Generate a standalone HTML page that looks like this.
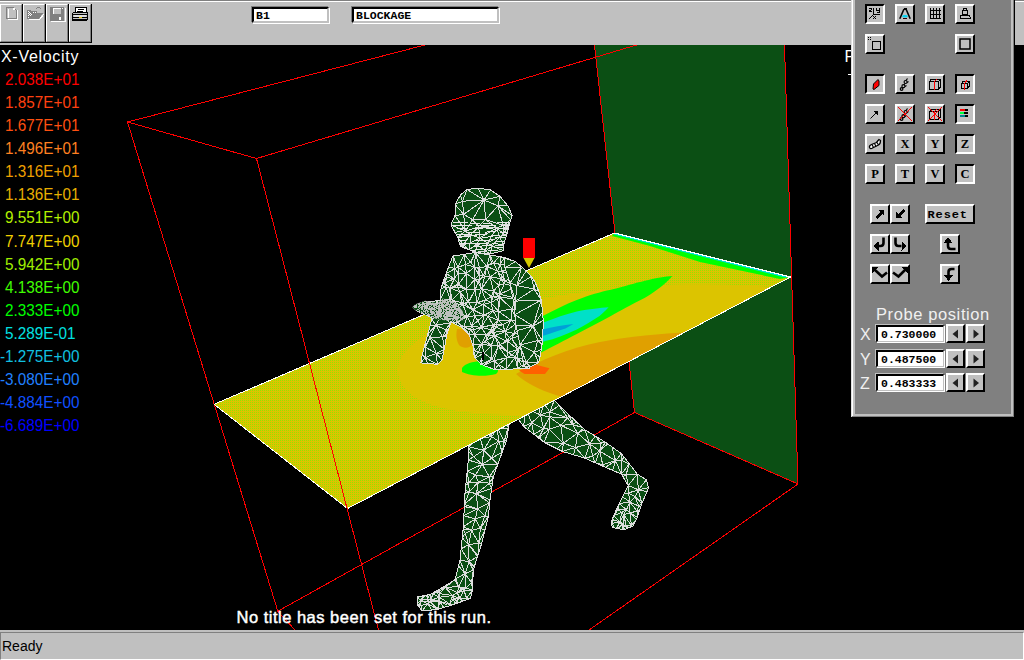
<!DOCTYPE html>
<html><head><meta charset="utf-8">
<style>
html,body{margin:0;padding:0;width:1024px;height:660px;overflow:hidden;background:#000;}
body{position:relative;font-family:"Liberation Sans",sans-serif;}
.a{position:absolute;}
#tb{left:0;top:0;width:1024px;height:45px;background:#c0c0c0;}
.tbb{position:absolute;top:4px;width:23px;height:39px;background:#000;}
.tbb::before{content:"";position:absolute;left:0;top:0;width:20px;height:36px;background:#c0c0c0;border-top:1px solid #fff;border-left:1px solid #fff;border-right:1px solid #808080;border-bottom:1px solid #808080;}
.fld{position:absolute;top:7px;height:12px;background:#fff;border-top:2px solid #000;border-left:2px solid #000;border-right:2px solid #c0c0c0;border-bottom:2px solid #c0c0c0;box-shadow:-1px -1px 0 #808080,1px 1px 0 #fff;font-family:"Liberation Mono",monospace;font-weight:bold;font-size:11.5px;line-height:13px;padding-left:2px;box-sizing:content-box;}
#sb{left:0;top:630px;width:1024px;height:30px;background:#c0c0c0;}
#sbi{position:absolute;left:0;top:2px;width:1022px;height:26px;border-top:1px solid #808080;border-left:1px solid #808080;border-right:1px solid #fff;border-bottom:1px solid #fff;}
#pn{left:851px;top:0;width:164px;height:419px;background:#808080;}
.pb{position:absolute;width:16px;height:16px;background:#c0c0c0;border:2px solid;border-color:#fff #000 #000 #fff;}
.pb.dn{border-color:#000 #fff #fff #000;}
.pb svg{position:absolute;left:0;top:0;}
.fld2{position:absolute;width:62px;height:14px;background:#fff;border-top:2px solid #000;border-left:2px solid #000;border-right:1px solid #c0c0c0;border-bottom:1px solid #c0c0c0;box-shadow:-1px -1px 0 #c0c0c0,1px 1px 0 #fff;font-family:"Liberation Mono",monospace;font-weight:bold;font-size:11.5px;line-height:15px;padding-left:3px;letter-spacing:0;}
.lg{position:absolute;font-size:15.5px;line-height:18px;white-space:pre;}
</style></head><body>
<!-- toolbar -->
<div id="tb" class="a">
  <div class="a" style="left:0;top:0;width:1024px;height:1px;background:#808080"></div>
  <div class="a" style="left:0;top:1px;width:1024px;height:1px;background:#fff"></div>
  <div class="tbb" style="left:0"></div>
  <div class="tbb" style="left:23px"></div>
  <div class="tbb" style="left:46px"></div>
  <div class="tbb" style="left:69px"></div>
  <svg class="a" style="left:0;top:0" width="100" height="45" shape-rendering="crispEdges">
    <path d="M7.5 19.5H17.5V9.5M8 8.5V19" stroke="#fff" fill="none"/>
    <path d="M6.5 7.5H13.5L16.5 10.5V18.5H6.5Z" stroke="#808080" fill="none"/>
    <rect x="13" y="8" width="2" height="2" fill="#fff"/>
    <path d="M28.5 19.5H39.5L43.5 14.5" stroke="#fff" fill="none"/>
    <polygon points="27,10 30,10 31,11 37,11 37,13 43,13 39,19 27,19" fill="#808080"/>
    <path d="M28 11h1M29 12h1M28 13h1M30 13h1M29 14h1M28 15h1M31 14h1M30 15h1M28 17h1M33 12h1M35 12h1" stroke="#fff"/>
    <path d="M35.5 9.5l2-2h2l2 2" stroke="#808080" fill="none"/>
    <rect x="50" y="7" width="14" height="14" fill="#808080"/>
    <path d="M51 21.5H65.5V8" stroke="#fff" fill="none"/>
    <rect x="53" y="8" width="8" height="6" fill="#c0c0c0"/>
    <path d="M53.5 14V8.5H61" stroke="#fff" fill="none"/>
    <rect x="59" y="17" width="2" height="3" fill="#fff"/>
    <rect x="62" y="8" width="1" height="1" fill="#fff"/>
    <polygon points="76,7 86,7 86,12 75,12" fill="#fff" stroke="#000" stroke-width="1"/>
    <path d="M78 9.5h6M77 11h6" stroke="#000"/>
    <rect x="72.5" y="12.5" width="15" height="8" rx="1.5" fill="#c0c0c0" stroke="#000"/>
    <path d="M73 14.5h14M73 17.5h14M73 19.5h14" stroke="#000"/>
    <rect x="74" y="15" width="12" height="2" fill="#e0e0e0"/>
    <rect x="79" y="17" width="3" height="1" fill="#e0c000"/>
  </svg>
  <div class="fld" style="left:252px;width:71px">B1</div>
  <div class="fld" style="left:352px;width:141px">BLOCKAGE</div>
</div>

<!-- scene -->
<svg id="scene" class="a" style="left:0;top:45px" width="1024" height="585" viewBox="0 45 1024 585">
<polygon points="594.5,45.0 784.5,45.0 798.0,484.0 634.5,412.5" fill="#0b4f14"/>
<g shape-rendering="crispEdges">
<line x1="127.5" y1="122" x2="425" y2="45" stroke="#ff0000" stroke-width="1"/>
<line x1="127.5" y1="122" x2="277.8" y2="611.2" stroke="#ff0000" stroke-width="1"/>
<line x1="277.8" y1="611.2" x2="634.5" y2="412.5" stroke="#ff0000" stroke-width="1"/>
<line x1="594.5" y1="45" x2="634.5" y2="412.5" stroke="#ff0000" stroke-width="1"/>
<line x1="784.5" y1="45" x2="798" y2="484" stroke="#ff0000" stroke-width="1"/>
<line x1="634.5" y1="412.5" x2="798" y2="484" stroke="#ff0000" stroke-width="1"/>
</g>
<clipPath id="fl"><polygon points="470.0,430.0 512.0,405.0 506.7,440.0 493.3,476.7 490.0,500.0 488.3,516.7 481.7,543.3 473.3,570.0 472.5,590.0 470.5,598.4 455.0,604.0 437.8,609.4 422.0,611.0 417.0,604.0 417.5,597.0 430.0,594.5 440.0,589.0 455.0,579.7 460.0,560.0 463.3,526.7 465.0,493.3 468.3,460.0 468.3,446.7"/></clipPath>
<polygon points="470.0,430.0 512.0,405.0 506.7,440.0 493.3,476.7 490.0,500.0 488.3,516.7 481.7,543.3 473.3,570.0 472.5,590.0 470.5,598.4 455.0,604.0 437.8,609.4 422.0,611.0 417.0,604.0 417.5,597.0 430.0,594.5 440.0,589.0 455.0,579.7 460.0,560.0 463.3,526.7 465.0,493.3 468.3,460.0 468.3,446.7" fill="#0b4f14"/>
<path clip-path="url(#fl)" d="M476.5 493.7L464.4 504.4M457.0 601.3L455.0 604.0M458.5 597.9L457.6 592.6M498.7 441.2L491.8 458.2M489.4 483.2L491.6 488.4M461.2 589.0L458.6 586.8M439.3 597.2L436.9 591.9M489.4 483.2L478.4 482.0M478.7 543.1L478.6 556.1M473.5 456.8L467.1 449.6M456.9 600.4L458.5 597.9M455.8 578.8L458.6 586.8M469.1 561.7L473.3 570.0M468.8 483.0L466.1 482.2M468.6 544.6L462.2 537.8M494.0 413.3L492.9 421.2M442.7 583.0L445.2 587.2M489.4 477.1L493.3 476.7M458.6 586.8L457.6 592.6M483.6 450.2L480.2 437.9M498.7 441.2L483.6 450.2M489.4 483.2L493.3 476.7M465.0 573.7L458.6 586.8M431.2 600.3L430.0 594.5M468.6 544.6L477.5 556.6M438.5 601.0L437.8 609.4M439.3 597.2L431.2 600.3M449.9 604.0L439.8 601.5M427.9 603.7L420.9 605.6M471.5 582.4L472.5 590.0M468.6 544.6L465.3 533.5M439.7 593.6L439.3 591.4M478.7 543.1L468.6 544.6M504.3 441.1L502.7 452.3M469.4 599.4L466.6 598.2M471.5 582.4L465.0 573.7M504.3 441.1L498.7 441.2M497.3 427.7L491.8 436.7M456.9 600.4L453.4 598.8M504.5 413.4L501.5 411.2M468.6 544.6L461.1 548.9M480.2 437.9L468.3 446.7M489.4 477.1L497.8 464.5M476.5 493.7L477.6 508.9M476.5 493.7L469.2 492.0M507.6 429.1L497.3 427.7M477.6 508.9L475.2 519.1M427.9 603.7L420.2 600.5M464.0 590.6L459.7 598.2M420.9 605.6L422.0 611.0M447.5 605.3L439.8 601.5M497.3 427.7L492.9 421.2M464.0 590.6L457.6 592.6M480.4 528.3L471.6 530.3M475.2 519.1L463.3 526.7M468.8 483.0L460.9 488.7M452.4 595.6L457.6 592.6M447.5 605.3L449.9 604.0M464.0 590.6L462.3 589.7M471.6 530.3L463.3 526.7M491.8 436.7L480.5 423.8M459.7 598.2L458.5 597.9M504.5 413.4L508.5 428.3M504.5 413.4L494.0 413.3M489.4 477.1L489.4 483.2M452.4 595.6L453.4 598.8M439.8 601.5L437.8 609.4M484.7 515.8L488.3 516.7M478.4 482.0L475.4 474.9M478.4 427.8L480.2 437.9M480.2 437.9L470.0 430.0M465.0 573.7L460.0 560.0M484.7 515.8L477.6 508.9M426.5 593.9L420.2 600.5M464.6 605.5L457.0 601.3M471.5 582.4L465.5 588.2M465.0 573.7L455.8 578.8M480.4 528.3L475.2 519.1M462.9 528.9L465.3 533.5M464.0 590.6L466.6 598.2M445.2 587.2L457.6 592.6M426.5 593.9L427.5 598.9M492.9 421.2L491.8 436.7M482.3 464.3L468.3 460.0M458.5 597.9L453.4 598.8M491.8 436.7L483.6 450.2M482.3 464.3L473.5 456.8M439.8 601.5L445.4 610.4M436.8 591.9L436.9 591.9M431.2 600.3L427.5 598.9M466.6 598.2L472.5 590.0M471.6 530.3L468.6 544.6M475.4 474.9L467.2 471.1M465.0 573.7L455.9 562.7M439.8 601.5L439.3 597.2M477.6 508.9L464.4 504.4M436.7 590.0L436.9 591.9M491.8 458.2L482.3 464.3M482.3 464.3L497.8 464.5M439.3 591.4L436.7 590.0M439.3 591.4L436.9 591.9M439.3 591.4L440.0 589.0M430.6 602.1L427.9 603.7M439.7 593.6L436.9 591.9M430.6 602.1L437.8 609.4M475.2 519.1L471.6 530.3M469.1 561.7L477.5 556.6M465.0 573.7L473.3 570.0M439.3 591.4L445.2 587.2M498.7 441.2L502.2 452.2M430.6 602.1L431.2 600.3M428.5 601.9L420.2 600.5M439.7 593.6L445.2 587.2M477.6 508.9L463.9 515.6M498.7 441.2L491.8 436.7M456.9 600.4L457.0 601.3M489.3 502.7L484.7 515.8M491.8 458.2L483.6 450.2M469.1 561.7L461.1 548.9M477.6 508.9L465.3 506.8M461.2 589.0L465.5 588.2M427.5 598.9L430.0 594.5M478.7 543.1L481.7 543.3M471.5 582.4L473.3 570.0M428.5 601.9L427.5 598.9M478.7 543.1L471.6 530.3M427.9 603.7L422.0 611.0M458.6 586.8L455.0 579.7M504.3 441.1L497.3 427.7M478.6 556.1L468.6 544.6M469.2 492.0L460.9 488.7M449.9 604.0L439.3 597.2M453.4 598.8L455.0 604.0M461.2 589.0L457.6 592.6M452.4 595.6L439.7 593.6M476.5 493.7L490.0 500.0M430.6 602.1L438.5 601.0M473.5 456.8L468.3 446.7M469.2 492.0L465.0 493.3M455.7 614.3L449.9 604.0M465.0 573.7L465.5 588.2M419.9 604.9L420.9 605.6M461.2 589.0L462.3 589.7M427.9 603.7L437.8 609.4M439.7 593.6L439.3 597.2M497.3 427.7L508.5 428.3M480.4 528.3L485.0 530.0M489.4 483.2L476.5 493.7M459.7 598.2L457.6 592.6M417.6 606.7L420.9 605.6M476.5 493.7L491.6 488.4M458.6 586.8L445.2 587.2M480.2 437.9L464.1 441.4M453.4 598.8L457.0 601.3M504.5 413.4L510.2 416.7M464.0 590.6L472.5 590.0M499.3 484.7L489.4 483.2M491.8 436.7L480.2 437.9M483.6 450.2L482.3 464.3M465.3 533.5L462.2 537.8M420.2 600.5L417.5 597.0M483.6 450.2L473.5 456.8M489.4 477.1L478.4 482.0M489.4 477.1L475.4 474.9M480.9 579.9L471.5 582.4M478.4 427.8L473.4 428.2M480.4 528.3L488.3 516.7M461.0 609.9L457.0 601.3M471.6 530.3L465.3 533.5M459.7 598.2L457.0 601.3M468.6 544.6L469.1 561.7M458.6 586.8L465.5 588.2M480.2 437.9L473.4 428.2M497.3 427.7L498.7 441.2M427.5 598.9L420.2 600.5M504.5 413.4L512.0 405.0M482.3 464.3L467.2 471.1M459.7 598.2L466.6 598.2M459.7 598.2L464.6 605.5M491.8 436.7L478.4 427.8M435.1 615.7L427.9 603.7M420.2 600.5L417.0 604.0M489.4 477.1L482.3 464.3M438.5 601.0L439.8 601.5M492.9 421.2L491.0 417.5M419.9 604.9L417.6 606.7M459.7 598.2L466.6 603.2M445.2 587.2L455.0 579.7M471.6 530.3L462.9 528.9M432.6 593.9L436.9 591.9M504.5 413.4L497.3 427.7M468.8 483.0L467.2 471.1M476.7 569.3L469.1 561.7M491.8 458.2L497.8 464.5M465.5 588.2L472.5 590.0M452.4 595.6L445.2 587.2M438.5 601.0L431.2 600.3M478.4 482.0L469.2 492.0M484.7 515.8L480.4 528.3M449.9 604.0L455.0 604.0M480.4 528.3L478.7 543.1M475.4 474.9L468.8 483.0M504.3 441.1L502.2 452.2M475.2 519.1L463.9 515.6M452.4 595.6L449.9 604.0M468.8 483.0L469.2 492.0M513.2 414.7L504.5 413.4M507.6 429.1L504.3 441.1M492.9 421.2L480.5 423.8M464.0 590.6L465.5 588.2M459.7 598.2L456.9 600.4M432.6 593.9L431.2 600.3M445.2 587.2L440.0 589.0M428.5 601.9L427.9 603.7M504.5 413.4L492.9 421.2M478.4 427.8L480.5 423.8M491.8 458.2L502.2 452.2M466.6 603.2L466.6 598.2M420.9 605.6L420.2 600.5M452.4 595.6L458.5 597.9M478.4 482.0L476.5 493.7M469.1 561.7L460.0 560.0M438.5 601.0L439.3 597.2M489.3 502.7L477.6 508.9M478.4 482.0L468.8 483.0M449.9 604.0L453.4 598.8M419.9 604.9L417.0 604.0M478.7 543.1L485.0 530.0M484.7 515.8L475.2 519.1M462.3 589.7L465.5 588.2M428.5 601.9L431.2 600.3M483.6 450.2L468.3 446.7M504.3 441.1L506.7 440.0M452.4 595.6L439.3 597.2M432.6 593.9L439.3 597.2M473.5 456.8L468.3 460.0M469.2 492.0L464.4 504.4M462.3 589.7L457.6 592.6M482.3 464.3L475.4 474.9M419.9 604.9L420.2 600.5M489.3 502.7L476.5 493.7M466.6 598.2L470.5 598.4M469.1 561.7L465.0 573.7M430.6 602.1L428.5 601.9" stroke="#dcdcdc" stroke-width="1" fill="none" shape-rendering="crispEdges"/>
<polygon points="470.0,430.0 512.0,405.0 506.7,440.0 493.3,476.7 490.0,500.0 488.3,516.7 481.7,543.3 473.3,570.0 472.5,590.0 470.5,598.4 455.0,604.0 437.8,609.4 422.0,611.0 417.0,604.0 417.5,597.0 430.0,594.5 440.0,589.0 455.0,579.7 460.0,560.0 463.3,526.7 465.0,493.3 468.3,460.0 468.3,446.7" fill="none" stroke="#e0e0e0" stroke-width="1" shape-rendering="crispEdges"/>
<clipPath id="bl"><polygon points="515.0,415.0 548.0,395.0 554.3,400.2 569.1,415.0 585.0,429.8 605.5,442.3 621.4,453.6 637.3,474.1 646.4,479.8 648.6,487.7 641.8,503.6 637.3,517.3 632.7,526.4 623.6,529.8 612.3,527.5 611.1,521.8 619.1,503.6 628.2,485.5 621.4,474.1 605.5,467.3 585.0,458.2 562.3,451.4 544.1,442.3 523.6,426.4"/></clipPath>
<polygon points="515.0,415.0 548.0,395.0 554.3,400.2 569.1,415.0 585.0,429.8 605.5,442.3 621.4,453.6 637.3,474.1 646.4,479.8 648.6,487.7 641.8,503.6 637.3,517.3 632.7,526.4 623.6,529.8 612.3,527.5 611.1,521.8 619.1,503.6 628.2,485.5 621.4,474.1 605.5,467.3 585.0,458.2 562.3,451.4 544.1,442.3 523.6,426.4" fill="#0b4f14"/>
<path clip-path="url(#bl)" d="M623.0 524.6L620.0 521.7M623.6 527.3L623.0 524.6M563.4 443.2L544.1 442.3M626.2 525.9L629.4 527.6M589.7 443.9L599.7 451.0M599.7 451.0L615.6 460.7M623.6 527.3L626.1 530.5M615.9 529.7L621.7 525.4M602.7 464.6L595.2 462.8M589.7 443.9L592.7 456.2M589.7 443.9L595.2 436.1M589.7 443.9L585.0 458.2M599.7 451.0L605.5 442.3M544.2 403.8L554.3 400.2M549.4 429.2L539.3 436.9M572.5 424.5L569.1 415.0M626.4 509.7L619.1 503.6M572.5 424.5L560.8 425.3M621.6 460.5L621.4 474.1M638.3 489.8L628.5 493.0M602.7 464.6L605.5 467.3M544.2 403.8L549.8 411.9M621.7 512.5L613.8 515.6M543.5 428.6L533.9 434.4M589.7 443.9L585.0 429.8M626.1 530.5L626.2 525.9M631.5 525.5L629.9 512.7M629.3 463.9L621.4 474.1M577.6 433.1L575.5 447.5M635.2 496.7L638.6 505.9M621.7 512.5L618.1 509.7M612.7 519.8L611.9 523.6M630.0 502.1L637.1 511.3M631.5 525.5L626.2 525.9M540.5 414.9L549.4 416.9M610.5 441.3L615.6 460.7M609.9 506.6L618.5 509.2M638.6 505.9L637.1 511.3M620.0 521.7L611.9 523.6M621.7 525.4L623.6 529.8M621.7 512.5L626.4 509.7M638.3 489.8L641.8 503.6M612.7 519.8L620.0 521.7M592.7 456.2L585.0 458.2M577.6 433.1L563.4 443.2M526.0 408.3L523.6 426.4M587.5 416.7L572.5 424.5M635.2 496.7L630.0 502.1M615.6 460.7L621.6 460.5M601.1 443.0L605.5 442.3M626.1 474.6L628.2 485.5M638.3 489.8L648.6 487.7M630.0 502.1L629.9 512.7M615.6 460.7L605.5 467.3M601.1 443.0L599.7 451.0M531.6 422.9L543.5 428.6M539.3 436.9L533.9 434.4M543.5 428.6L549.4 429.2M615.6 460.7L612.4 470.9M549.8 411.9L567.6 417.8M531.6 422.9L523.6 426.4M567.6 417.8L572.5 424.5M618.5 509.2L621.7 512.5M615.6 460.7L621.4 453.6M615.9 529.7L611.9 523.6M531.6 422.9L525.7 432.4M549.8 411.9L554.3 400.2M647.0 508.1L637.1 511.3M563.4 443.2L554.9 450.5M599.7 451.0L602.7 464.6M626.1 474.6L637.3 474.1M601.1 443.0L595.2 436.1M549.8 411.9L549.4 416.9M584.2 428.0L577.6 433.1M629.9 512.7L637.3 517.3M563.4 443.2L562.3 451.4M635.2 496.7L641.8 503.6M615.9 529.7L620.0 521.7M601.1 443.0L589.7 443.9M539.3 436.9L544.1 442.3M623.7 514.7L621.7 512.5M623.7 514.7L629.9 512.7M575.5 447.5L562.3 451.4M623.7 514.7L620.0 521.7M589.7 443.9L575.5 447.5M623.7 514.7L631.5 525.5M623.7 514.7L626.2 525.9M599.7 451.0L592.7 456.2M626.1 474.6L629.3 463.9M629.9 512.7L626.4 509.7M628.5 493.0L628.2 485.5M549.4 416.9L560.8 425.3M544.2 403.8L548.0 395.0M638.6 505.9L641.8 503.6M623.0 524.6L621.6 525.0M544.2 403.8L540.5 414.9M531.6 422.9L526.0 408.3M629.9 512.7L637.1 511.3M602.7 464.6L604.5 475.5M631.5 525.5L632.7 526.4M625.3 455.2L621.6 460.5M623.6 527.3L621.7 525.4M540.5 414.9L543.5 428.6M544.2 403.8L537.0 401.7M610.5 441.3L599.7 451.0M626.2 525.9L623.0 524.6M609.9 506.6L618.1 509.7M638.6 505.9L647.0 508.1M623.6 527.3L626.2 525.9M631.5 525.5L629.4 527.6M540.5 414.9L531.6 422.9M549.4 429.2L544.1 442.3M592.7 456.2L595.2 462.8M559.0 405.5L567.6 417.8M621.7 525.4L623.0 524.6M549.4 429.2L563.4 443.2M637.1 511.3L637.3 517.3M540.5 414.9L537.0 401.7M619.7 494.7L630.0 502.1M572.5 424.5L584.2 428.0M621.6 460.5L629.3 463.9M638.3 489.8L652.1 492.7M543.5 428.6L539.3 436.9M567.6 417.8L569.1 415.0M618.1 509.7L613.8 515.6M620.0 521.7L613.8 515.6M628.2 528.5L626.2 525.9M638.3 489.8L646.4 479.8M621.7 512.5L620.0 521.7M638.3 489.8L628.2 485.5M567.6 417.8L560.8 425.3M615.6 460.7L621.4 474.1M572.5 424.5L577.6 433.1M630.0 502.1L619.1 503.6M559.0 405.5L549.8 411.9M638.3 489.8L635.2 496.7M615.6 460.7L602.7 464.6M540.5 414.9L526.0 408.3M531.6 422.9L533.9 434.4M618.5 509.2L619.1 503.6M621.6 460.5L621.4 453.6M620.0 521.7L621.6 525.0M621.7 525.4L621.6 525.0M549.8 411.9L540.5 414.9M638.3 489.8L637.3 474.1M567.6 417.8L549.4 416.9M560.8 425.3L577.6 433.1M626.1 474.6L617.8 480.8M577.6 433.1L589.7 443.9M628.5 493.0L635.2 496.7M575.5 447.5L573.6 454.8M623.7 514.7L623.0 524.6M636.4 519.3L629.9 512.7M618.5 509.2L618.1 509.7M549.4 416.9L549.4 429.2M630.0 502.1L626.4 509.7M560.8 425.3L563.4 443.2M637.3 474.1L628.2 485.5M573.9 412.5L572.5 424.5M628.5 493.0L630.0 502.1M636.4 519.3L631.5 525.5M623.6 527.3L623.6 529.8M577.6 433.1L585.0 429.8M618.5 509.2L626.4 509.7M599.7 451.0L595.2 462.8M644.8 515.3L637.1 511.3M631.8 527.3L631.5 525.5M575.5 447.5L585.0 458.2M626.1 474.6L621.4 474.1M539.3 436.9L531.5 446.9M549.4 416.9L543.5 428.6M615.9 529.7L621.6 525.0M560.8 425.3L549.4 429.2M563.4 443.2L575.5 447.5M623.7 514.7L626.4 509.7M628.5 493.0L619.7 494.7M630.0 502.1L638.6 505.9" stroke="#dcdcdc" stroke-width="1" fill="none" shape-rendering="crispEdges"/>
<polygon points="515.0,415.0 548.0,395.0 554.3,400.2 569.1,415.0 585.0,429.8 605.5,442.3 621.4,453.6 637.3,474.1 646.4,479.8 648.6,487.7 641.8,503.6 637.3,517.3 632.7,526.4 623.6,529.8 612.3,527.5 611.1,521.8 619.1,503.6 628.2,485.5 621.4,474.1 605.5,467.3 585.0,458.2 562.3,451.4 544.1,442.3 523.6,426.4" fill="none" stroke="#e0e0e0" stroke-width="1" shape-rendering="crispEdges"/>
<pattern id="dy" patternUnits="userSpaceOnUse" x="0" y="0" width="2" height="2"><rect width="2" height="2" fill="#dcc400"/><rect width="1" height="1" fill="#96e000"/></pattern>
<polygon points="214.0,404.3 614.5,233.0 790.5,277.0 347.5,508.5" fill="url(#dy)"/>
<clipPath id="pl"><polygon points="214.0,404.3 614.5,233.0 790.5,277.0 347.5,508.5"/></clipPath>
<g clip-path="url(#pl)">
<path d="M400,360 C420,320 520,300 600,290 C680,280 760,285 800,290 L640,400 C560,420 460,420 420,400 C400,390 395,375 400,360Z" fill="#dcc400"/>
<path d="M516,374 C540,360 570,348 600,342 C630,336 660,334 690,332 L700,345 L562,397 C545,392 528,385 516,374Z" fill="#e0a000"/>
<polygon points="519,370.5 536,364.8 549.5,368.2 545,373.9 524.5,373.9" fill="#ff6000"/>
<path d="M457,329 C465,328 472,336 473,343 C470,349 463,349 459,345 C456,340 456,334 457,329Z" fill="#e0a000"/>
<path d="M538,318 L542.7,315.9 C555,310 566,304 576.8,300 C590,295 600,292 610.9,289.8 C625,286 635,283 645,280.7 C657,278 665,276.5 672.3,276.1 C668,281 660,289 645,297.7 C630,305 620,311 610.9,315.9 C600,322 588,328 576.8,334 C565,340 552,347 541.6,352.3 L538,354Z" fill="#00ff00"/>
<path d="M538,324 L542.7,322.7 C555,318 566,314 576.8,311.4 C590,309 600,308 608.6,307.3 C605,311 602,314 599.5,316 C592,321 585,325 576.8,329.5 C565,335 555,339 545,341 L538,344Z" fill="#00e0c8"/>
<path d="M538,331 L542.7,329.5 C552,327 563,325 573.4,323.9 C571,325.5 568,327 565.5,328.4 C558,331 551,333 545,335.2 L538,337Z" fill="#00a0d8"/>
<path d="M462,368 C466,362 478,360 490,362 C498,366 500,371 496,374 C485,377 470,376 462,372Z" fill="#00ff00"/>
<polygon points="614.5,233 790.5,277 780,279 700,262 650,246 612,236" fill="#00ff00"/>
<polygon points="614.5,233 790.5,277 785,277.5 614,234.5" fill="#00e0e0"/>
</g>
<g shape-rendering="crispEdges">
<line x1="214" y1="404.3" x2="614.5" y2="233" stroke="#ffffff" stroke-width="1"/>
<line x1="614.5" y1="233" x2="790.5" y2="277" stroke="#ffffff" stroke-width="1"/>
<line x1="790.5" y1="277" x2="347.5" y2="508.5" stroke="#ffffff" stroke-width="1"/>
<line x1="347.5" y1="508.5" x2="214" y2="404.3" stroke="#ffffff" stroke-width="1"/>
</g>
<clipPath id="to"><polygon points="452.9,256.1 475.4,252.5 504.4,257.5 515.2,261.5 521.6,266.9 526.0,271.2 531.3,276.5 535.6,283.0 538.8,291.6 541.3,300.0 543.3,320.5 542.6,341.0 539.9,357.4 538.5,362.9 530.3,367.0 529.0,368.4 494.8,369.7 481.0,364.3 474.3,357.4 472.9,345.0 468.8,334.2 462.0,327.3 456.5,324.6 451.0,321.9 446.9,334.2 444.2,349.2 442.1,360.2 437.3,364.3 420.9,362.9 422.3,354.7 427.8,334.2 431.9,319.1 429.1,316.4 416.8,311.0 414.1,306.2 423.7,302.7 437.3,300.7 440.0,300.2 441.1,288.3 444.3,278.7 448.6,266.9"/></clipPath>
<polygon points="452.9,256.1 475.4,252.5 504.4,257.5 515.2,261.5 521.6,266.9 526.0,271.2 531.3,276.5 535.6,283.0 538.8,291.6 541.3,300.0 543.3,320.5 542.6,341.0 539.9,357.4 538.5,362.9 530.3,367.0 529.0,368.4 494.8,369.7 481.0,364.3 474.3,357.4 472.9,345.0 468.8,334.2 462.0,327.3 456.5,324.6 451.0,321.9 446.9,334.2 444.2,349.2 442.1,360.2 437.3,364.3 420.9,362.9 422.3,354.7 427.8,334.2 431.9,319.1 429.1,316.4 416.8,311.0 414.1,306.2 423.7,302.7 437.3,300.7 440.0,300.2 441.1,288.3 444.3,278.7 448.6,266.9" fill="#0b4f14"/>
<path clip-path="url(#to)" d="M518.9 348.5L517.0 358.3M515.3 357.2L517.0 358.3M525.5 284.8L516.1 298.3M493.2 296.4L491.3 296.5M486.7 266.2L490.0 277.2M467.2 316.5L455.3 310.2M506.5 357.8L498.4 364.5M493.5 263.1L489.9 255.0M454.4 316.1L467.2 316.5M442.6 336.9L446.9 334.2M494.8 335.7L488.8 335.4M440.8 315.0L431.9 319.1M498.5 320.3L488.1 316.2M479.4 280.0L478.1 282.6M478.1 282.6L474.7 279.5M436.3 353.4L444.9 352.8M479.4 280.0L479.0 279.8M484.2 315.2L477.7 320.7M493.5 291.1L498.5 296.2M507.8 341.4L517.9 349.4M507.9 352.5L517.9 349.4M484.2 315.2L492.9 310.7M464.1 303.2L468.6 302.2M498.7 285.2L493.5 291.1M493.2 296.4L493.5 291.1M494.0 360.8L498.4 364.5M450.2 299.6L440.0 300.2M458.4 285.1L458.5 284.2M477.7 320.7L481.4 327.4M491.9 332.2L493.7 332.1M494.8 335.7L498.3 345.9M491.3 296.5L491.0 302.6M494.8 335.7L500.1 344.4M517.2 275.8L525.5 284.8M486.7 266.2L493.5 263.1M492.9 310.7L488.1 316.2M481.5 288.8L484.7 276.4M490.0 277.2L484.7 276.4M525.5 284.8L534.8 286.1M490.0 277.2L500.7 278.5M455.0 268.6L452.9 256.1M466.4 273.5L474.7 279.5M534.8 333.3L543.3 320.5M491.4 263.0L493.5 263.1M512.0 309.0L516.6 321.1M435.8 325.2L431.9 319.1M509.1 265.9L521.6 266.9M465.1 303.7L468.6 302.2M446.9 277.5L444.3 278.7M425.2 357.6L422.3 354.7M539.9 357.4L530.3 367.0M507.8 341.4L509.3 337.6M504.2 283.9L499.7 294.2M485.6 300.0L483.0 304.5M466.4 273.5L458.2 273.2M481.5 288.8L478.1 282.6M498.4 364.5L494.8 369.7M474.5 267.0L478.9 268.5M484.0 353.2L481.7 343.9M429.1 316.4L423.7 302.7M467.2 316.5L474.9 315.8M537.9 348.3L551.1 348.7M492.9 324.8L492.9 326.8M516.0 286.8L525.5 284.8M534.8 333.3L537.9 348.3M486.7 266.2L491.4 263.0M502.5 272.1L501.6 275.9M517.2 275.8L516.0 286.8M507.9 352.5L506.5 357.8M498.3 345.9L492.1 359.1M491.2 345.8L484.0 353.2M491.2 345.8L492.1 359.1M463.7 326.8L457.4 322.3M467.2 316.5L457.4 322.3M516.0 286.8L499.7 294.2M500.1 264.3L504.4 257.5M496.0 326.7L496.0 324.6M486.3 340.4L481.7 343.9M459.9 291.9L464.1 303.2M474.5 267.0L474.7 279.5M493.7 329.4L496.0 326.7M482.8 365.8L494.0 360.8M479.0 275.3L479.0 279.8M453.5 323.2L457.4 322.3M494.8 335.7L486.3 340.4M435.8 325.2L442.6 336.9M430.0 337.4L442.6 336.9M470.7 262.2L474.5 267.0M454.3 278.8L449.9 287.8M425.2 357.6L420.9 362.9M442.6 336.9L453.7 337.3M504.9 281.0L504.2 283.9M452.2 300.1L455.3 310.2M475.0 289.8L474.7 279.5M457.4 322.3L456.5 324.6M457.7 287.0L449.9 287.8M425.2 357.6L431.7 372.9M498.4 364.5L506.2 369.3M494.0 360.8L506.5 357.8M494.0 360.8L498.3 345.9M528.0 322.9L534.8 333.3M524.7 334.4L534.8 333.3M500.2 297.8L499.7 294.2M509.1 265.9L517.2 275.8M491.3 296.5L485.6 300.0M534.8 333.3L551.1 336.6M498.5 311.4L511.1 320.3M441.1 284.9L446.2 287.5M505.0 331.7L506.5 341.0M475.2 350.7L472.9 345.0M517.2 275.8L527.8 276.0M465.5 264.6L464.1 254.3M482.8 365.8L492.1 359.1M528.0 322.9L519.8 327.6M524.7 334.4L519.8 327.6M491.2 345.8L486.3 340.4M464.1 303.2L465.1 303.7M466.4 273.5L474.5 267.0M498.5 311.4L512.0 309.0M500.2 297.8L512.0 309.0M474.5 267.0L479.0 275.3M440.8 315.0L455.3 310.2M459.9 291.9L452.2 300.1M486.3 340.4L488.8 335.4M521.5 365.6L530.3 367.0M502.9 324.7L498.5 320.3M465.1 303.7L472.9 309.8M466.4 273.5L466.3 289.1M500.2 297.8L498.5 296.2M463.7 326.8L468.8 334.2M435.8 325.2L430.0 337.4M509.3 337.6L514.7 333.4M473.8 329.8L470.3 329.0M488.3 334.4L488.8 335.4M440.8 315.0L450.3 322.9M534.8 286.1L528.3 298.4M455.0 268.6L458.1 267.2M491.2 345.8L485.3 341.9M464.1 303.2L463.0 304.6M445.8 330.0L457.0 328.5M457.4 322.3L462.0 327.3M486.7 266.2L489.9 255.0M516.0 286.8L504.2 283.9M515.3 357.2L506.2 369.3M446.2 287.5L449.9 287.8M458.7 304.7L455.3 310.2M504.9 281.0L517.2 275.8M454.4 316.1L451.0 321.9M517.0 358.3L539.9 357.4M528.0 322.9L524.7 334.4M454.3 278.8L458.5 284.2M491.4 263.0L489.9 255.0M497.9 298.5L491.0 302.6M505.0 331.7L496.0 326.7M452.2 300.1L458.7 304.7M515.5 324.1L514.7 333.4M466.4 273.5L458.5 284.2M484.2 315.2L488.1 316.2M463.7 326.8L471.9 326.3M467.2 316.5L471.9 326.3M518.9 348.5L539.9 357.4M446.9 277.5L444.5 283.1M458.5 284.2L449.9 287.8M459.9 291.9L466.3 289.1M423.5 325.5L435.8 325.2M493.2 296.4L491.0 302.6M517.0 358.3L517.6 368.8M488.3 334.4L491.9 332.2M479.0 279.8L474.7 279.5M435.8 325.2L450.3 322.9M475.2 350.7L481.7 343.9M505.0 331.7L515.5 324.1M459.9 291.9L457.7 287.0M504.9 281.0L502.5 272.1M455.0 268.6L446.4 273.5M528.3 298.4L541.3 300.0M525.5 284.8L535.6 283.0M500.1 264.3L493.5 263.1M501.4 254.3L493.5 263.1M425.3 347.1L425.2 357.6M499.7 294.2L498.5 296.2M524.7 334.4L514.7 333.4M470.7 262.2L464.1 254.3M486.6 335.1L488.8 335.4M479.5 268.1L478.9 268.5M500.7 278.5L501.6 275.9M521.2 313.4L528.0 322.9M516.6 321.1L528.0 322.9M466.3 289.1L457.7 287.0M515.3 357.2L517.6 368.8M517.2 275.8L502.5 272.1M484.7 276.4L483.4 275.9M486.7 266.2L475.4 252.5M500.1 264.3L509.1 265.9M493.7 329.4L491.9 332.2M493.7 329.4L493.7 332.1M458.1 267.2L452.9 256.1M498.5 311.4L492.9 310.7M465.5 264.6L474.5 267.0M446.4 273.5L446.9 277.5M477.1 302.8L468.6 302.2M481.5 288.8L485.6 300.0M472.9 309.8L483.0 304.5M442.6 336.9L445.8 330.0M450.3 322.9L445.8 330.0M521.5 365.6L517.0 358.3M488.1 316.2L492.9 324.8M517.0 358.3L517.9 349.4M445.8 330.0L446.9 334.2M463.7 326.8L470.5 329.9M474.5 267.0L475.4 252.5M454.3 278.8L446.4 273.5M491.9 332.2L491.2 329.7M527.8 276.0L525.5 284.8M517.2 275.8L526.0 271.2M486.0 334.8L481.7 343.9M478.1 282.6L475.0 289.8M452.2 300.1L450.2 299.6M491.0 302.6L483.0 304.5M479.7 363.0L484.0 353.2M504.9 281.0L500.7 278.5M525.5 284.8L531.3 276.5M518.9 348.5L517.9 349.4M515.3 357.2L517.9 349.4M521.2 313.4L516.6 321.1M488.1 316.2L481.4 327.4M458.7 304.7L461.7 302.9M470.5 329.9L470.3 329.0M501.4 254.3L500.1 264.3M502.9 324.7L505.0 331.7M494.8 335.7L505.0 331.7M446.2 287.5L441.1 288.3M436.3 353.4L437.3 364.3M486.0 334.8L481.4 327.4M481.5 288.8L477.1 302.8M507.9 352.5L498.3 345.9M477.1 302.8L485.6 300.0M492.9 310.7L491.0 302.6M503.3 373.2L498.4 364.5M507.9 352.5L500.1 344.4M507.8 341.4L500.1 344.4M478.6 351.8L474.3 357.4M471.9 326.3L474.9 315.8M463.0 304.6L455.3 310.2M440.8 315.0L450.2 299.6M416.8 311.0L423.7 302.7M493.2 296.4L497.9 298.5M484.2 315.2L474.9 315.8M498.7 285.2L500.7 278.5M497.7 271.3L501.6 275.9M506.5 357.8L498.3 345.9M466.3 289.1L474.7 279.5M435.8 325.2L427.8 334.2M430.0 337.4L427.8 334.2M455.0 268.6L448.6 266.9M484.0 353.2L481.0 364.3M509.1 265.9L515.2 261.5M494.8 335.7L506.5 341.0M517.2 275.8L521.6 266.9M478.6 351.8L481.7 343.9M492.9 310.7L498.5 320.3M507.8 341.4L511.7 338.5M479.4 280.0L479.0 275.3M516.1 298.3L521.2 313.4M472.9 309.8L463.0 304.6M477.1 302.8L483.0 304.5M491.2 329.7L492.9 326.8M500.7 278.5L504.2 283.9M479.4 280.0L481.5 288.8M430.0 337.4L444.2 349.2M479.0 275.3L478.9 268.5M494.0 360.8L494.8 369.7M446.2 287.5L440.0 300.2M511.1 320.3L515.5 324.1M436.3 353.4L442.1 360.2M500.1 344.4L506.5 341.0M477.1 302.8L472.9 309.8M486.7 266.2L479.5 268.1M500.1 264.3L502.5 272.1M507.9 352.5L512.2 354.9M444.5 283.1L444.3 278.7M486.7 266.2L497.7 271.3M515.3 357.2L506.5 357.8M512.0 309.0L521.2 313.4M494.0 360.8L492.1 359.1M466.3 289.1L475.0 289.8M516.1 298.3L499.7 294.2M474.6 334.6L486.0 334.8M509.1 265.9L504.4 257.5M479.0 275.3L474.7 279.5M512.2 354.9L517.9 349.4M502.9 324.7L496.0 326.7M425.2 357.6L437.3 364.3M440.8 315.0L440.0 300.2M479.4 280.0L483.4 275.9M486.7 266.2L483.4 275.9M459.9 291.9L449.9 287.8M516.1 298.3L512.0 309.0M452.2 300.1L449.9 287.8M481.5 288.8L491.3 296.5M485.6 300.0L491.0 302.6M454.4 316.1L455.3 310.2M525.5 284.8L528.3 298.4M467.2 316.5L472.9 309.8M494.8 335.7L491.2 345.8M484.0 353.2L492.1 359.1M493.5 263.1L497.7 271.3M492.9 324.8L496.0 324.6M485.3 341.9L481.7 343.9M440.8 315.0L451.0 321.9M534.8 286.1L538.8 291.6M478.1 282.6L479.0 279.8M475.2 350.7L474.3 357.4M512.0 309.0L511.1 320.3M514.7 333.4L519.8 327.6M459.9 291.9L468.6 302.2M436.3 353.4L425.2 357.6M481.5 288.8L493.5 291.1M490.0 277.2L493.5 291.1M500.2 297.8L498.5 311.4M491.2 329.7L492.9 324.8M431.1 317.2L437.3 300.7M466.3 289.1L468.6 302.2M465.1 303.7L463.0 304.6M516.0 286.8L516.1 298.3M502.9 324.7L496.0 324.6M474.6 334.6L468.8 334.2M479.4 280.0L484.7 276.4M478.6 351.8L484.0 353.2M440.8 315.0L435.8 325.2M452.2 300.1L461.7 302.9M459.9 291.9L461.7 302.9M486.7 266.2L484.7 276.4M539.9 316.2L543.3 320.5M528.0 322.9L543.3 320.5M475.0 289.8L468.6 302.2M491.2 345.8L481.7 343.9M537.9 348.3L539.9 357.4M491.2 329.7L481.4 327.4M466.4 273.5L458.1 267.2M534.8 333.3L542.6 341.0M458.4 285.1L457.7 287.0M477.7 320.7L474.9 315.8M458.1 267.2L458.2 273.2M496.0 326.7L492.9 326.8M467.2 316.5L463.0 304.6M527.8 276.0L531.3 276.5M483.4 275.9L479.0 275.3M502.9 324.7L511.1 320.3M488.3 334.4L491.2 329.7M481.7 343.9L472.9 345.0M505.0 331.7L514.7 333.4M430.0 337.4L436.3 353.4M534.8 286.1L535.6 283.0M450.2 299.6L455.3 310.2M455.0 268.6L458.2 273.2M481.4 327.4L492.9 324.8M500.2 297.8L516.1 298.3M504.9 281.0L501.6 275.9M466.3 289.1L458.5 284.2M429.1 316.4L437.3 300.7M473.8 329.8L471.9 326.3M493.7 329.4L491.2 329.7M524.7 334.4L537.9 348.3M483.4 275.9L479.5 268.1M505.0 331.7L511.1 320.3M498.5 311.4L491.0 302.6M505.0 331.7L509.3 337.6M440.8 315.0L454.4 316.1M528.3 298.4L538.8 291.6M502.5 272.1L497.7 271.3M474.6 334.6L472.9 345.0M454.4 316.1L457.4 322.3M539.9 316.2L541.3 300.0M537.9 348.3L542.6 341.0M464.1 303.2L461.7 302.9M446.9 277.5L443.3 275.8M486.3 340.4L485.3 341.9M539.9 316.2L528.0 322.9M521.5 365.6L517.6 368.8M491.3 296.5L493.5 291.1M498.5 311.4L498.5 320.3M527.8 276.0L526.0 271.2M493.7 329.4L492.9 326.8M494.8 335.7L491.9 332.2M444.5 283.1L449.9 287.8M494.8 335.7L493.7 332.1M470.7 262.2L465.5 264.6M454.3 278.8L458.2 273.2M430.0 337.4L425.3 347.1M509.3 337.6L506.5 341.0M524.7 334.4L511.7 338.5M479.5 268.1L479.0 275.3M450.2 299.6L449.9 287.8M498.3 345.9L500.1 344.4M473.8 329.8L474.6 334.6M420.6 302.5L416.8 311.0M466.3 289.1L458.4 285.1M492.1 359.1L481.0 364.3M491.2 345.8L498.3 345.9M548.2 304.6L539.9 316.2M455.0 268.6L454.3 278.8M431.1 317.2L440.8 315.0M496.0 326.7L492.9 324.8M498.7 285.2L499.7 294.2M504.9 281.0L516.0 286.8M517.0 358.3L530.3 367.0M475.2 350.7L478.6 351.8M474.6 358.2L478.6 351.8M524.7 334.4L518.9 348.5M444.5 283.1L446.2 287.5M465.5 264.6L458.1 267.2M511.7 338.5L517.9 349.4M505.0 331.7L493.7 332.1M497.9 298.5L498.5 296.2M474.6 358.2L484.0 353.2M474.6 334.6L470.5 329.9M473.8 329.8L470.5 329.9M454.3 278.8L446.9 277.5M516.6 321.1L519.8 327.6M486.6 335.1L486.3 340.4M498.5 320.3L492.9 324.8M425.3 347.1L436.3 353.4M450.2 299.6L446.2 287.5M445.8 330.0L454.9 333.2M454.4 316.1L453.5 323.2M466.4 273.5L465.5 264.6M528.3 298.4L539.9 316.2M521.2 313.4L539.9 316.2M500.1 264.3L497.7 271.3M493.7 332.1L496.0 326.7M471.9 326.3L481.4 327.4M484.2 315.2L481.4 327.4M539.9 316.2L549.0 313.6M493.2 296.4L498.5 296.2M470.5 329.9L468.8 334.2M521.5 365.6L529.0 368.4M511.7 338.5L514.7 333.4M490.0 277.2L498.7 285.2M463.7 326.8L470.3 329.0M518.9 348.5L537.9 348.3M463.7 326.8L462.0 327.3M474.6 334.6L481.7 343.9M454.3 278.8L444.5 283.1M441.1 284.9L444.5 283.1M515.5 324.1L519.8 327.6M498.5 320.3L496.0 324.6M479.5 268.1L474.5 267.0M477.7 320.7L471.9 326.3M506.5 357.8L512.2 354.9M471.9 326.3L470.3 329.0M500.2 297.8L497.9 298.5M498.5 311.4L497.9 298.5M506.5 357.8L506.2 369.3M511.7 338.5L509.3 337.6M488.3 334.4L486.0 334.8M474.6 334.6L481.4 327.4M473.8 329.8L481.4 327.4M516.6 321.1L515.5 324.1M498.5 320.3L511.1 320.3M507.8 341.4L506.5 341.0M518.9 348.5L511.7 338.5M528.3 298.4L521.2 313.4M481.5 288.8L475.0 289.8M484.2 315.2L483.0 304.5M458.5 284.2L458.2 273.2M498.7 285.2L504.2 283.9M507.8 341.4L507.9 352.5M458.4 285.1L449.9 287.8M490.0 277.2L481.5 288.8M442.6 336.9L444.2 349.2M436.3 353.4L444.2 349.2M486.0 334.8L491.2 329.7M475.2 350.7L471.9 350.2M467.2 316.5L463.7 326.8M463.0 304.6L461.7 302.9M472.9 309.8L474.9 315.8M470.7 262.2L475.4 252.5M484.2 315.2L472.9 309.8M509.1 265.9L502.5 272.1M472.9 309.8L468.6 302.2M515.3 357.2L512.2 354.9M500.7 278.5L497.7 271.3M479.5 268.1L475.4 252.5M490.0 277.2L497.7 271.3M458.7 304.7L463.0 304.6M458.1 267.2L464.1 254.3M486.0 334.8L486.3 340.4M486.6 335.1L488.3 334.4M486.6 335.1L486.0 334.8M440.8 315.0L437.3 300.7M516.6 321.1L511.1 320.3M491.9 332.2L488.8 335.4M516.1 298.3L528.3 298.4M493.5 291.1L499.7 294.2M492.9 310.7L483.0 304.5M435.8 325.2L445.8 330.0M477.1 302.8L475.0 289.8" stroke="#dcdcdc" stroke-width="1" fill="none" shape-rendering="crispEdges"/>
<polygon points="452.9,256.1 475.4,252.5 504.4,257.5 515.2,261.5 521.6,266.9 526.0,271.2 531.3,276.5 535.6,283.0 538.8,291.6 541.3,300.0 543.3,320.5 542.6,341.0 539.9,357.4 538.5,362.9 530.3,367.0 529.0,368.4 494.8,369.7 481.0,364.3 474.3,357.4 472.9,345.0 468.8,334.2 462.0,327.3 456.5,324.6 451.0,321.9 446.9,334.2 444.2,349.2 442.1,360.2 437.3,364.3 420.9,362.9 422.3,354.7 427.8,334.2 431.9,319.1 429.1,316.4 416.8,311.0 414.1,306.2 423.7,302.7 437.3,300.7 440.0,300.2 441.1,288.3 444.3,278.7 448.6,266.9" fill="none" stroke="#e0e0e0" stroke-width="1" shape-rendering="crispEdges"/>
<clipPath id="ra"><polygon points="504.0,258.0 515.2,261.5 521.6,266.9 526.0,271.2 531.3,276.5 535.6,283.0 538.8,291.6 541.3,300.0 543.3,320.5 542.6,341.0 539.9,357.4 538.5,362.9 530.3,367.0 524.0,366.0 520.0,345.0 516.0,325.0 514.0,304.4 509.8,283.0 505.0,268.0"/></clipPath>
<polygon points="504.0,258.0 515.2,261.5 521.6,266.9 526.0,271.2 531.3,276.5 535.6,283.0 538.8,291.6 541.3,300.0 543.3,320.5 542.6,341.0 539.9,357.4 538.5,362.9 530.3,367.0 524.0,366.0 520.0,345.0 516.0,325.0 514.0,304.4 509.8,283.0 505.0,268.0" fill="#0b4f14"/>
<path clip-path="url(#ra)" d="M534.1 289.1L515.4 301.1M537.8 340.5L520.0 345.0M533.0 326.0L542.6 341.0M534.1 289.1L538.8 291.6M526.2 362.6L530.3 367.0M511.4 353.0L526.2 362.6M515.2 261.5L505.0 268.0M526.2 362.6L520.0 345.0M515.4 301.1L509.8 283.0M516.9 285.5L534.1 289.1M537.8 340.5L542.6 341.0M515.4 301.1L514.8 314.6M537.8 340.5L534.4 352.4M533.0 326.0L515.3 331.2M545.8 307.3L533.0 326.0M534.4 352.4L520.0 345.0M521.2 267.7L505.0 268.0M526.2 362.6L538.5 362.9M505.9 302.1L515.4 301.1M514.8 314.6L533.0 326.0M526.2 362.6L524.0 366.0M514.8 314.6L541.3 300.0M516.9 285.5L531.3 276.5M533.0 326.0L516.0 325.0M534.4 352.4L538.5 362.9M516.9 285.5L515.4 301.1M533.0 326.0L543.3 320.5M534.1 289.1L535.6 283.0M537.8 340.5L546.0 347.7M534.1 289.1L541.3 300.0M516.9 285.5L509.8 283.0M534.4 352.4L526.2 362.6M515.4 301.1L541.3 300.0M521.2 267.7L516.9 285.5M515.4 301.1L514.0 304.4M516.9 285.5L526.0 271.2M533.0 326.0L520.0 345.0M534.4 352.4L539.9 357.4M533.0 326.0L537.8 340.5M533.0 326.0L541.3 300.0M534.1 289.1L531.3 276.5M521.2 267.7L509.8 283.0M534.4 352.4L546.0 347.7" stroke="#dcdcdc" stroke-width="1" fill="none" shape-rendering="crispEdges"/>
<polygon points="504.0,258.0 515.2,261.5 521.6,266.9 526.0,271.2 531.3,276.5 535.6,283.0 538.8,291.6 541.3,300.0 543.3,320.5 542.6,341.0 539.9,357.4 538.5,362.9 530.3,367.0 524.0,366.0 520.0,345.0 516.0,325.0 514.0,304.4 509.8,283.0 505.0,268.0" fill="none" stroke="#e0e0e0" stroke-width="1" shape-rendering="crispEdges"/>
<path d="M482 352h2v8h-2z" fill="#000"/>
<clipPath id="hd"><polygon points="467.0,189.5 478.0,188.0 490.5,190.0 500.0,196.4 508.0,206.0 512.3,215.5 509.5,223.6 506.8,234.5 503.4,245.5 503.4,250.7 490.0,254.0 475.4,252.4 469.0,249.7 460.4,246.4 457.7,237.3 450.9,225.0 455.0,215.5 455.0,204.5 460.5,195.0"/></clipPath>
<polygon points="467.0,189.5 478.0,188.0 490.5,190.0 500.0,196.4 508.0,206.0 512.3,215.5 509.5,223.6 506.8,234.5 503.4,245.5 503.4,250.7 490.0,254.0 475.4,252.4 469.0,249.7 460.4,246.4 457.7,237.3 450.9,225.0 455.0,215.5 455.0,204.5 460.5,195.0" fill="#0b4f14"/>
<path clip-path="url(#hd)" d="M484.0 200.0L485.6 219.6M470.3 242.8L469.0 249.7M492.2 246.2L503.4 250.7M463.7 214.3L455.0 215.5M465.3 231.0L457.7 237.3M484.0 200.0L500.0 196.4M463.4 244.8L465.2 250.9M497.9 205.9L510.9 219.9M485.4 251.0L475.4 252.4M462.5 201.2L484.0 200.0M510.9 219.9L503.1 225.3M505.4 229.9L503.7 234.0M465.3 231.0L455.0 215.5M470.5 234.6L470.3 242.8M476.8 244.4L469.0 249.7M470.5 234.6L457.7 237.3M484.0 200.0L497.9 205.9M492.2 246.2L499.6 236.8M478.7 227.0L479.0 225.7M479.8 237.9L496.8 228.0M487.4 242.9L496.8 228.0M476.8 244.4L470.3 242.8M472.6 219.7L465.3 231.0M503.9 228.2L503.7 234.0M487.4 242.9L492.2 246.2M462.5 201.2L455.0 204.5M462.5 201.2L463.7 214.3M476.8 244.4L485.4 251.0M496.8 228.0L503.7 234.0M499.6 236.8L506.8 234.5M505.4 229.9L509.5 223.6M484.0 200.0L467.0 189.5M478.7 227.0L496.8 228.0M497.9 205.9L503.1 225.3M487.4 242.9L479.8 237.9M505.4 229.9L503.9 228.2M484.0 200.0L490.5 190.0M463.7 214.3L472.6 219.7M485.6 219.6L479.0 225.7M497.9 205.9L485.6 219.6M478.7 227.0L465.3 231.0M485.4 251.0L490.0 254.0M503.9 228.2L509.5 223.6M472.6 219.7L485.6 219.6M499.6 236.8L503.7 234.0M465.3 231.0L450.9 225.0M496.8 228.0L479.0 225.7M476.8 244.4L475.4 252.4M497.9 205.9L500.0 196.4M480.6 260.2L485.4 251.0M478.7 227.0L479.8 237.9M463.4 244.8L469.0 249.7M470.5 234.6L478.7 227.0M485.6 219.6L496.8 228.0M497.9 205.9L512.3 215.5M463.4 244.8L470.3 242.8M463.7 250.7L461.6 245.2M503.9 228.2L496.8 228.0M484.0 200.0L472.6 219.7M463.7 214.3L465.3 231.0M463.4 244.8L457.7 237.3M503.1 225.3L509.5 223.6M479.8 237.9L470.3 242.8M492.2 246.2L503.4 245.5M503.1 225.3L503.9 228.2M462.5 201.2L467.0 189.5M470.5 234.6L463.4 244.8M462.5 201.2L460.5 195.0M487.4 242.9L485.4 251.0M499.6 236.8L503.4 245.5M492.2 246.2L490.0 254.0M484.0 200.0L478.0 188.0M463.7 214.3L455.0 204.5M463.4 244.8L460.2 244.0M503.1 225.3L496.8 228.0M499.6 236.8L496.8 228.0M485.6 219.6L503.1 225.3M503.7 234.0L506.8 234.5M470.5 234.6L465.3 231.0M461.6 245.2L460.4 246.4M476.8 244.4L487.4 242.9M470.5 234.6L479.8 237.9M497.9 205.9L508.0 206.0M512.2 229.1L505.4 229.9M463.4 244.8L461.6 245.2M484.0 200.0L463.7 214.3M476.8 244.4L479.8 237.9M487.4 242.9L499.6 236.8M492.2 246.2L485.4 251.0M472.6 219.7L478.7 227.0M460.2 244.0L461.6 245.2M463.4 244.8L463.7 250.7M505.4 229.9L506.8 234.5M472.6 219.7L479.0 225.7" stroke="#dcdcdc" stroke-width="1" fill="none" shape-rendering="crispEdges"/>
<polygon points="467.0,189.5 478.0,188.0 490.5,190.0 500.0,196.4 508.0,206.0 512.3,215.5 509.5,223.6 506.8,234.5 503.4,245.5 503.4,250.7 490.0,254.0 475.4,252.4 469.0,249.7 460.4,246.4 457.7,237.3 450.9,225.0 455.0,215.5 455.0,204.5 460.5,195.0" fill="none" stroke="#e0e0e0" stroke-width="1" shape-rendering="crispEdges"/>
<path clip-path="url(#hd)" d="M453.0 223.0L468.0 222.7M470.1 223.0L480.2 223.4M482.5 223.0L492.3 223.4M496.8 223.0L510.0 222.6M453.1 225.9L472.1 225.8M476.2 225.9L495.6 225.4M501.5 225.9L512.4 225.6M456.7 228.8L468.0 229.0M473.5 228.8L483.3 228.4M486.4 228.8L495.6 229.1M499.3 228.8L509.4 228.8M453.7 232.3L462.2 231.6M465.6 232.3L480.1 232.8M484.9 232.3L497.7 230.8M500.3 232.3L522.3 231.4M452.3 235.0L472.1 234.6M475.3 235.0L487.8 233.7M490.5 235.0L498.8 235.2M502.7 235.0L512.5 235.0M456.8 237.6L477.3 235.3M482.5 237.6L493.2 236.5M495.3 237.6L507.4 237.7M453.7 241.1L466.2 240.2M472.1 241.1L493.2 239.8M497.0 241.1L509.4 241.2M455.2 243.8L466.7 244.0M471.6 243.8L487.3 243.6M492.0 243.8L511.0 244.5M453.1 247.0L467.4 247.2M472.9 247.0L491.6 244.9M495.0 247.0L505.3 247.5M507.9 247.0L519.3 246.3M457.1 250.5L467.3 250.1M469.6 250.5L486.2 249.1M488.4 250.5L498.0 250.2M502.5 250.5L515.1 250.3" stroke="#e8e8e8" stroke-width="1" fill="none" shape-rendering="crispEdges"/>
<polygon points="412.3,307.2 415.3,304.3 425.2,300.8 429.3,301.4 437.0,303.7 442.8,298.4 451.0,300.8 456.9,303.7 462.7,311.3 464.5,320.1 451.0,321.3 436.4,319.0 431.1,316.6 421.7,313.1 415.9,310.7" fill="#bcc0bc"/>
<path d="M428 307h1v1h-1zM463 319h1v1h-1zM454 314h1v1h-1zM419 309h1v1h-1zM450 317h1v1h-1zM452 304h1v1h-1zM453 303h1v1h-1zM419 307h1v1h-1zM438 304h1v1h-1zM444 312h1v1h-1zM424 312h1v1h-1zM430 315h1v1h-1zM434 311h1v1h-1zM447 310h1v1h-1zM417 305h1v1h-1zM453 313h1v1h-1zM459 316h1v1h-1zM427 313h1v1h-1zM430 315h1v1h-1zM458 314h1v1h-1zM451 311h1v1h-1zM453 308h1v1h-1zM441 299h1v1h-1zM441 317h1v1h-1zM449 317h1v1h-1zM438 319h1v1h-1zM444 308h1v1h-1zM433 310h1v1h-1zM439 318h1v1h-1zM415 309h1v1h-1zM418 308h1v1h-1zM440 304h1v1h-1zM452 308h1v1h-1zM433 315h1v1h-1zM420 306h1v1h-1zM432 315h1v1h-1zM414 308h1v1h-1zM458 319h1v1h-1zM451 306h1v1h-1zM420 311h1v1h-1zM454 319h1v1h-1zM459 318h1v1h-1zM447 306h1v1h-1zM421 305h1v1h-1zM450 305h1v1h-1zM448 310h1v1h-1zM420 309h1v1h-1zM437 305h1v1h-1zM420 312h1v1h-1zM413 307h1v1h-1zM442 310h1v1h-1zM459 319h1v1h-1zM461 317h1v1h-1zM437 310h1v1h-1zM433 307h1v1h-1zM436 315h1v1h-1zM435 306h1v1h-1zM446 301h1v1h-1zM440 318h1v1h-1zM434 316h1v1h-1zM443 303h1v1h-1zM431 306h1v1h-1zM441 319h1v1h-1zM431 302h1v1h-1zM432 305h1v1h-1zM441 312h1v1h-1zM451 320h1v1h-1zM430 313h1v1h-1zM459 315h1v1h-1zM461 317h1v1h-1zM433 314h1v1h-1zM435 310h1v1h-1zM448 307h1v1h-1zM428 312h1v1h-1zM428 307h1v1h-1zM417 307h1v1h-1zM426 314h1v1h-1zM431 315h1v1h-1zM453 312h1v1h-1zM421 302h1v1h-1zM452 314h1v1h-1zM459 316h1v1h-1zM459 314h1v1h-1zM442 314h1v1h-1zM432 306h1v1h-1zM442 309h1v1h-1zM449 320h1v1h-1zM456 307h1v1h-1zM432 317h1v1h-1zM416 308h1v1h-1zM439 317h1v1h-1zM444 313h1v1h-1zM421 310h1v1h-1zM429 313h1v1h-1zM444 310h1v1h-1zM429 310h1v1h-1zM436 309h1v1h-1zM425 304h1v1h-1zM458 312h1v1h-1zM461 316h1v1h-1zM442 315h1v1h-1zM450 308h1v1h-1zM445 303h1v1h-1zM464 319h1v1h-1zM420 303h1v1h-1zM445 308h1v1h-1zM451 317h1v1h-1zM432 310h1v1h-1zM417 304h1v1h-1zM423 305h1v1h-1zM429 311h1v1h-1zM429 305h1v1h-1zM457 313h1v1h-1zM450 320h1v1h-1zM424 310h1v1h-1zM448 317h1v1h-1zM425 309h1v1h-1zM463 319h1v1h-1zM442 316h1v1h-1zM420 310h1v1h-1zM443 314h1v1h-1zM445 320h1v1h-1zM439 317h1v1h-1zM429 312h1v1h-1zM456 315h1v1h-1zM448 305h1v1h-1zM417 308h1v1h-1zM437 309h1v1h-1zM444 304h1v1h-1zM417 306h1v1h-1zM424 302h1v1h-1zM462 316h1v1h-1zM441 301h1v1h-1zM457 307h1v1h-1zM428 310h1v1h-1zM426 312h1v1h-1zM451 320h1v1h-1zM455 320h1v1h-1zM445 315h1v1h-1zM443 299h1v1h-1zM441 308h1v1h-1zM415 304h1v1h-1zM428 306h1v1h-1zM449 302h1v1h-1zM435 312h1v1h-1zM423 301h1v1h-1zM423 309h1v1h-1zM446 306h1v1h-1zM425 302h1v1h-1zM437 318h1v1h-1zM449 302h1v1h-1zM435 306h1v1h-1zM448 300h1v1h-1zM425 314h1v1h-1zM442 310h1v1h-1zM422 311h1v1h-1zM452 314h1v1h-1zM428 306h1v1h-1zM457 315h1v1h-1zM451 304h1v1h-1zM443 318h1v1h-1zM453 320h1v1h-1zM418 310h1v1h-1zM417 310h1v1h-1zM440 306h1v1h-1zM430 315h1v1h-1zM437 307h1v1h-1zM417 304h1v1h-1zM426 314h1v1h-1zM431 315h1v1h-1zM449 303h1v1h-1zM457 305h1v1h-1zM435 313h1v1h-1zM420 308h1v1h-1zM430 307h1v1h-1zM457 311h1v1h-1zM444 307h1v1h-1zM454 310h1v1h-1zM451 319h1v1h-1zM444 308h1v1h-1zM452 317h1v1h-1zM423 308h1v1h-1zM455 310h1v1h-1zM423 307h1v1h-1zM422 310h1v1h-1zM454 311h1v1h-1zM451 311h1v1h-1zM429 311h1v1h-1zM421 303h1v1h-1zM445 311h1v1h-1zM443 317h1v1h-1zM417 307h1v1h-1zM416 308h1v1h-1zM417 307h1v1h-1zM452 304h1v1h-1zM451 303h1v1h-1zM427 309h1v1h-1zM415 308h1v1h-1zM442 317h1v1h-1zM442 311h1v1h-1zM426 311h1v1h-1zM424 313h1v1h-1zM442 310h1v1h-1zM445 311h1v1h-1zM429 313h1v1h-1zM416 309h1v1h-1zM442 314h1v1h-1zM418 305h1v1h-1zM435 308h1v1h-1zM424 312h1v1h-1zM423 312h1v1h-1zM430 305h1v1h-1z" fill="#0b4f14"/>
<rect x="523" y="238" width="12" height="20" fill="#ff0000"/>
<polygon points="523.5,258 534.5,258 529,268" fill="#d4c800"/>
<g shape-rendering="crispEdges">
<line x1="127.5" y1="122" x2="256.5" y2="158.5" stroke="#ff0000" stroke-width="1"/>
<line x1="256.5" y1="158.5" x2="636.5" y2="45" stroke="#ff0000" stroke-width="1"/>
<line x1="256.5" y1="158.5" x2="378.5" y2="630" stroke="#ff0000" stroke-width="1"/>
<line x1="277.8" y1="611.2" x2="295" y2="630" stroke="#ff0000" stroke-width="1"/>
<line x1="589" y1="630" x2="798" y2="484" stroke="#ff0000" stroke-width="1"/>
</g>
</svg>

<!-- legend -->
<!--OV-->
<svg id="ov" class="a" style="left:0;top:0" width="1024" height="660" font-family="Liberation Sans">
<text transform="translate(1,61.5) scale(1,1.0)" font-size="16" letter-spacing="0.7" fill="#fff">X-Velocity</text>
<text transform="translate(5,85.0) scale(1,1.1)" x="0" y="0" font-size="15.3" fill="#ff0000">2.038E+01</text>
<text transform="translate(5,108.1) scale(1,1.1)" x="0" y="0" font-size="15.3" fill="#ff4010">1.857E+01</text>
<text transform="translate(5,131.1) scale(1,1.1)" x="0" y="0" font-size="15.3" fill="#ff5010">1.677E+01</text>
<text transform="translate(5,154.2) scale(1,1.1)" x="0" y="0" font-size="15.3" fill="#ff8020">1.496E+01</text>
<text transform="translate(5,177.3) scale(1,1.1)" x="0" y="0" font-size="15.3" fill="#f0a000">1.316E+01</text>
<text transform="translate(5,200.3) scale(1,1.1)" x="0" y="0" font-size="15.3" fill="#e8b000">1.136E+01</text>
<text transform="translate(5,223.4) scale(1,1.1)" x="0" y="0" font-size="15.3" fill="#b4f000">9.551E+00</text>
<text transform="translate(5,246.5) scale(1,1.1)" x="0" y="0" font-size="15.3" fill="#f0d000">7.747E+00</text>
<text transform="translate(5,269.6) scale(1,1.1)" x="0" y="0" font-size="15.3" fill="#a0f000">5.942E+00</text>
<text transform="translate(5,292.6) scale(1,1.1)" x="0" y="0" font-size="15.3" fill="#40ff00">4.138E+00</text>
<text transform="translate(5,315.7) scale(1,1.1)" x="0" y="0" font-size="15.3" fill="#00ff00">2.333E+00</text>
<text transform="translate(5,338.8) scale(1,1.1)" x="0" y="0" font-size="15.3" fill="#00e0e0">5.289E-01</text>
<text transform="translate(0,361.8) scale(1,1.1)" x="0" y="0" font-size="15.3" fill="#10c0e0">-1.275E+00</text>
<text transform="translate(0,384.9) scale(1,1.1)" x="0" y="0" font-size="15.3" fill="#2080ff">-3.080E+00</text>
<text transform="translate(0,408.0) scale(1,1.1)" x="0" y="0" font-size="15.3" fill="#1050ff">-4.884E+00</text>
<text transform="translate(0,431.1) scale(1,1.1)" x="0" y="0" font-size="15.3" fill="#0000ff">-6.689E+00</text>
<text x="236.5" y="623" font-size="16.5" letter-spacing="0.5" fill="#fff" stroke="#fff" stroke-width="0.45">No title has been set for this run.</text>
<text x="844.5" y="62" font-size="16" fill="#fff">P</text>
<rect x="848" y="74" width="3" height="1" fill="#fff"/>
</svg>
<!--/OV-->

<!-- status bar -->
<div id="sb" class="a"><div id="sbi"></div>
  <div class="a" style="left:2px;top:8px;font-size:14px;line-height:16px;color:#000">Ready</div>
</div>

<!-- panel -->
<div id="pn" class="a">
  <div class="a" style="left:0;top:0;width:1px;height:418px;background:#dfdfdf"></div>
  <div class="a" style="left:1px;top:0;width:1px;height:417px;background:#fff"></div>
  <div class="a" style="left:2px;top:0;width:2px;height:416px;background:#c0c0c0"></div>
  <div class="a" style="left:160px;top:0;width:2px;height:416px;background:#c0c0c0"></div>
  <div class="a" style="left:162px;top:0;width:1px;height:418px;background:#808080"></div>
  <div class="a" style="left:163px;top:0;width:1px;height:419px;background:#000"></div>
  <div class="a" style="left:2px;top:414px;width:160px;height:2px;background:#c0c0c0"></div>
  <div class="a" style="left:1px;top:416px;width:162px;height:1px;background:#808080"></div>
  <div class="a" style="left:0;top:417px;width:163px;height:2px;background:#000"></div>
</div>
<!--BUTTONS-->
<div class="pb dn" style="left:865px;top:4px;width:16px;height:16px"><svg width="16" height="16" viewBox="0 0 16 16" shape-rendering="crispEdges"><path d="M6.5 2V8.5H13M6.5 8.5L2 13" stroke="#000" fill="none" stroke-width="1"/><path d="M2 2.5h3M5 3L2 5.5M2 5.5h3" stroke="#000" fill="none" stroke-width="1"/><path d="M9.5 2v2.5h3M12.5 2v4.5h-3" stroke="#000" fill="none" stroke-width="1"/><path d="M6 10l3 3M9 10l-3 3" stroke="#000" fill="none" stroke-width="1"/></svg></div>
<div class="pb" style="left:895px;top:4px;width:16px;height:16px"><svg width="16" height="16" viewBox="0 0 16 16" shape-rendering="crispEdges"><rect x="6.5" y="1.5" width="3" height="2" fill="#000"/><path d="M7 3L2.8 12.8M9 3L13.2 12.8" stroke="#000" fill="none" stroke-width="1.6" shape-rendering="auto"/><ellipse cx="8" cy="10.2" rx="2.9" ry="1.3" fill="#00d0f0" shape-rendering="auto"/><rect x="6" y="11.5" width="4" height="1" fill="#300"/></svg></div>
<div class="pb" style="left:925px;top:4px;width:16px;height:16px"><svg width="16" height="16" viewBox="0 0 16 16" shape-rendering="crispEdges"><path d="M3.5 2V13M6.5 2V13M9.5 2V13M12.5 2V13M2.5 4.5H13.5M2.5 8.5H13.5M2.5 12.5H13.5" stroke="#000" fill="none" stroke-width="1"/></svg></div>
<div class="pb" style="left:955px;top:4px;width:16px;height:16px"><svg width="16" height="16" viewBox="0 0 16 16" shape-rendering="crispEdges"><path d="M6.5 2.5h3v2h-3zM5.5 4.5h5v4h-5zM3.5 9.5h9l1 3h-10z" stroke="#000" fill="none" stroke-width="1"/></svg></div>
<div class="pb" style="left:865px;top:34px;width:16px;height:16px"><svg width="16" height="16" viewBox="0 0 16 16" shape-rendering="crispEdges"><rect x="1" y="1" width="1" height="1" fill="#000"/><rect x="3" y="1" width="1" height="1" fill="#000"/><rect x="1" y="3" width="1" height="1" fill="#000"/><rect x="3" y="3" width="1" height="1" fill="#000"/><rect x="5.5" y="5.5" width="8" height="8" stroke="#000" fill="none" stroke-width="1"/></svg></div>
<div class="pb" style="left:955px;top:34px;width:16px;height:16px"><svg width="16" height="16" viewBox="0 0 16 16" shape-rendering="crispEdges"><rect x="3" y="3" width="10" height="10" stroke="#000" fill="none" stroke-width="1.5" shape-rendering="auto"/></svg></div>
<div class="pb dn" style="left:865px;top:74px;width:16px;height:16px"><svg width="16" height="16" viewBox="0 0 16 16" shape-rendering="crispEdges"><polygon points="6.5,8 11,3.5 12,5 12,9.5 7,13.5 6,13" fill="#ff0000" stroke="#000" stroke-width="1" shape-rendering="auto"/></svg></div>
<div class="pb" style="left:895px;top:74px;width:16px;height:16px"><svg width="16" height="16" viewBox="0 0 16 16" shape-rendering="crispEdges"><g fill="none" stroke="#000" stroke-width="1.2" shape-rendering="auto"><path d="M10.5 2.5L9 4.5"/><circle cx="8.6" cy="6" r="1.5"/><path d="M7.8 7.5L7 9"/><circle cx="6.4" cy="10.2" r="1.5"/><path d="M5.7 11.6L5 12.3"/><circle cx="4.6" cy="13" r="1.3"/><path d="M10 6.5L11.5 5.5M8 10.5L9.5 9.5"/></g></svg></div>
<div class="pb" style="left:925px;top:74px;width:16px;height:16px"><svg width="16" height="16" viewBox="0 0 16 16" shape-rendering="crispEdges"><path d="M2.5 5.5h9v8h-9zM2.5 5.5l2-2.5h9l-2 2.5M13.5 3v8l-2 2.5" stroke="#000" fill="none" stroke-width="1"/><path d="M7.5 13.5V5.5L10 3" stroke="#ff0000" fill="none"/></svg></div>
<div class="pb dn" style="left:955px;top:74px;width:16px;height:16px"><svg width="16" height="16" viewBox="0 0 16 16" shape-rendering="crispEdges"><path d="M4.5 7.5h6v5h-6zM4.5 7.5l2-2.5h6l-2 2.5M12.5 5v5l-2 2.5" stroke="#000" fill="none" stroke-width="1"/><path d="M7.5 13.5V7.5l2.5-3" stroke="#ff0000" fill="none"/></svg></div>
<div class="pb" style="left:865px;top:104px;width:16px;height:16px"><svg width="16" height="16" viewBox="0 0 16 16" shape-rendering="crispEdges"><path d="M3.5 12.5L10 6" stroke="#000" fill="none" stroke-width="1" stroke-width="1.3" shape-rendering="auto"/><polygon points="6.5,5 11.5,4.5 11,9.5" fill="#000"/></svg></div>
<div class="pb" style="left:895px;top:104px;width:16px;height:16px"><svg width="16" height="16" viewBox="0 0 16 16" shape-rendering="crispEdges"><g fill="none" stroke="#000" stroke-width="1.2" shape-rendering="auto"><path d="M10.5 2.5L9 4.5"/><circle cx="8.6" cy="6" r="1.5"/><path d="M7.8 7.5L7 9"/><circle cx="6.4" cy="10.2" r="1.5"/><path d="M5.7 11.6L5 12.3"/><circle cx="4.6" cy="13" r="1.3"/><path d="M10 6.5L11.5 5.5M8 10.5L9.5 9.5"/></g><path d="M1 1L15 15M15 1L1 15" stroke="#ff0000" stroke-width="1" fill="none" shape-rendering="auto"/></svg></div>
<div class="pb" style="left:925px;top:104px;width:16px;height:16px"><svg width="16" height="16" viewBox="0 0 16 16" shape-rendering="crispEdges"><path d="M2.5 5.5h9v8h-9zM2.5 5.5l2-2.5h9l-2 2.5M13.5 3v8l-2 2.5" stroke="#000" fill="none" stroke-width="1"/><path d="M7.5 13.5V5.5L10 3" stroke="#ff0000" fill="none"/><path d="M1 1L15 15M15 1L1 15" stroke="#ff0000" stroke-width="1" fill="none" shape-rendering="auto"/></svg></div>
<div class="pb dn" style="left:955px;top:104px;width:16px;height:16px"><svg width="16" height="16" viewBox="0 0 16 16" shape-rendering="crispEdges"><rect x="3" y="3" width="5" height="2" fill="#ff0000"/><rect x="8" y="3" width="3" height="2" fill="#000"/><rect x="3" y="6" width="4" height="2" fill="#00ff40"/><rect x="7" y="6" width="4" height="2" fill="#000"/><rect x="3" y="9" width="5" height="2" fill="#008090"/><rect x="8" y="9" width="3" height="2" fill="#000"/></svg></div>
<div class="pb" style="left:865px;top:134px;width:16px;height:16px"><svg width="16" height="16" viewBox="0 0 16 16" shape-rendering="crispEdges"><g shape-rendering="auto"><path d="M2.5 11.5Q2 9.5 4.5 8.5L9.5 6.5Q11 4.5 12 3.5L13.5 4.5Q13.5 8 11.5 9L5.5 12Q3.5 13.5 2.5 11.5Z" fill="#fff" stroke="#000" stroke-width="1.3"/><path d="M5 8.5L6.5 11.5M7.5 7.5L9 10.5M10 6.5L11.5 9" stroke="#000" stroke-width="1.2" fill="none"/></g></svg></div>
<div class="pb" style="left:895px;top:134px;width:16px;height:16px"><svg width="16" height="16" viewBox="0 0 16 16" shape-rendering="crispEdges"><text x="8" y="12.3" text-anchor="middle" font-family="Liberation Serif" font-weight="bold" font-size="12.5" fill="#000" shape-rendering="auto">X</text></svg></div>
<div class="pb" style="left:925px;top:134px;width:16px;height:16px"><svg width="16" height="16" viewBox="0 0 16 16" shape-rendering="crispEdges"><text x="8" y="12.3" text-anchor="middle" font-family="Liberation Serif" font-weight="bold" font-size="12.5" fill="#000" shape-rendering="auto">Y</text></svg></div>
<div class="pb dn" style="left:955px;top:134px;width:16px;height:16px"><svg width="16" height="16" viewBox="0 0 16 16" shape-rendering="crispEdges"><text x="8" y="12.3" text-anchor="middle" font-family="Liberation Serif" font-weight="bold" font-size="12.5" fill="#000" shape-rendering="auto">Z</text></svg></div>
<div class="pb" style="left:865px;top:164px;width:16px;height:16px"><svg width="16" height="16" viewBox="0 0 16 16" shape-rendering="crispEdges"><text x="8" y="12.3" text-anchor="middle" font-family="Liberation Serif" font-weight="bold" font-size="12.5" fill="#000" shape-rendering="auto">P</text></svg></div>
<div class="pb" style="left:895px;top:164px;width:16px;height:16px"><svg width="16" height="16" viewBox="0 0 16 16" shape-rendering="crispEdges"><text x="8" y="12.3" text-anchor="middle" font-family="Liberation Serif" font-weight="bold" font-size="12.5" fill="#000" shape-rendering="auto">T</text></svg></div>
<div class="pb" style="left:925px;top:164px;width:16px;height:16px"><svg width="16" height="16" viewBox="0 0 16 16" shape-rendering="crispEdges"><text x="8" y="12.3" text-anchor="middle" font-family="Liberation Serif" font-weight="bold" font-size="12.5" fill="#000" shape-rendering="auto">V</text></svg></div>
<div class="pb dn" style="left:955px;top:164px;width:16px;height:16px"><svg width="16" height="16" viewBox="0 0 16 16" shape-rendering="crispEdges"><text x="8" y="12.3" text-anchor="middle" font-family="Liberation Serif" font-weight="bold" font-size="12.5" fill="#000" shape-rendering="auto">C</text></svg></div>
<div class="pb" style="left:870px;top:204px;width:16px;height:16px"><svg width="16" height="16" viewBox="0 0 16 16" shape-rendering="crispEdges"><polygon points="3,11 8,6 6,4 12,4 12,10 10,8 5,13" fill="#000"/></svg></div>
<div class="pb" style="left:890px;top:204px;width:16px;height:16px"><svg width="16" height="16" viewBox="0 0 16 16" shape-rendering="crispEdges"><polygon points="13,5 8,10 10,12 4,12 4,6 6,8 11,3" fill="#000"/></svg></div>
<div class="pb" style="left:925px;top:204px;width:46px;height:16px"><svg width="46" height="16" style="position:absolute;left:0;top:0"><text x="0.5" y="12.6" font-family="Liberation Mono" font-weight="bold" font-size="12" letter-spacing="0.9" transform="scale(1,0.92)" fill="#000">Reset</text></svg></div>
<div class="pb" style="left:870px;top:234px;width:16px;height:16px"><svg width="16" height="16" viewBox="0 0 16 16" shape-rendering="crispEdges"><path d="M11.5 1.5v5.5q0 3-3 3h-3" stroke="#000" stroke-width="2.6" fill="none" shape-rendering="auto"/><polygon points="1,10 6.5,5.5 6.5,14.5" fill="#000"/></svg></div>
<div class="pb" style="left:890px;top:234px;width:16px;height:16px"><svg width="16" height="16" viewBox="0 0 16 16" shape-rendering="crispEdges"><path d="M3.5 1.5v5.5q0 3 3 3h3" stroke="#000" stroke-width="2.6" fill="none" shape-rendering="auto"/><polygon points="15,10 9.5,5.5 9.5,14.5" fill="#000"/></svg></div>
<div class="pb" style="left:940px;top:234px;width:16px;height:16px"><svg width="16" height="16" viewBox="0 0 16 16" shape-rendering="crispEdges"><path d="M6 6v4q0 3 3 3h4.5" stroke="#000" stroke-width="2.6" fill="none" shape-rendering="auto"/><polygon points="6,1 1.5,7 10.5,7" fill="#000"/></svg></div>
<div class="pb" style="left:870px;top:264px;width:16px;height:16px"><svg width="16" height="16" viewBox="0 0 16 16" shape-rendering="crispEdges"><path d="M3 4L10 10.5L15 6.5" stroke="#000" stroke-width="2.6" fill="none" shape-rendering="auto"/><polygon points="0,1 6.5,1 0,7.5" fill="#000"/></svg></div>
<div class="pb" style="left:890px;top:264px;width:16px;height:16px"><svg width="16" height="16" viewBox="0 0 16 16" shape-rendering="crispEdges"><path d="M1 6.5L6.5 10.5L13 4" stroke="#000" stroke-width="2.6" fill="none" shape-rendering="auto"/><polygon points="16,1 9.5,1 16,7.5" fill="#000"/></svg></div>
<div class="pb" style="left:940px;top:264px;width:16px;height:16px"><svg width="16" height="16" viewBox="0 0 16 16" shape-rendering="crispEdges"><path d="M12.5 3h-3q-3 0-3 3v5" stroke="#000" stroke-width="2.6" fill="none" shape-rendering="auto"/><polygon points="6.5,15 2,9 11,9" fill="#000"/></svg></div>
<div class="a" style="left:876px;top:305px;font-size:16.5px;letter-spacing:0.6px;line-height:18px;color:#f0f0f0">Probe position</div>
<div class="a" style="left:860px;top:325.5px;font-size:16px;line-height:18px;color:#f0f0f0">X</div>
<div class="fld2" style="left:876px;top:325px">0.730000</div>
<div class="pb" style="left:946px;top:324px;width:15px;height:15px"><svg width="15" height="15"><polygon points="4.5,8 10,3.5 10,12.5" fill="#202020"/></svg></div>
<div class="pb" style="left:966px;top:324px;width:15px;height:15px"><svg width="15" height="15"><polygon points="11,8 5.5,3.5 5.5,12.5" fill="#202020"/></svg></div>
<div class="a" style="left:860px;top:350.5px;font-size:16px;line-height:18px;color:#f0f0f0">Y</div>
<div class="fld2" style="left:876px;top:350px">0.487500</div>
<div class="pb" style="left:946px;top:349px;width:15px;height:15px"><svg width="15" height="15"><polygon points="4.5,8 10,3.5 10,12.5" fill="#202020"/></svg></div>
<div class="pb" style="left:966px;top:349px;width:15px;height:15px"><svg width="15" height="15"><polygon points="11,8 5.5,3.5 5.5,12.5" fill="#202020"/></svg></div>
<div class="a" style="left:860px;top:374.5px;font-size:16px;line-height:18px;color:#f0f0f0">Z</div>
<div class="fld2" style="left:876px;top:374px">0.483333</div>
<div class="pb" style="left:946px;top:373px;width:15px;height:15px"><svg width="15" height="15"><polygon points="4.5,8 10,3.5 10,12.5" fill="#202020"/></svg></div>
<div class="pb" style="left:966px;top:373px;width:15px;height:15px"><svg width="15" height="15"><polygon points="11,8 5.5,3.5 5.5,12.5" fill="#202020"/></svg></div>
<!--/BUTTONS--></body></html>
